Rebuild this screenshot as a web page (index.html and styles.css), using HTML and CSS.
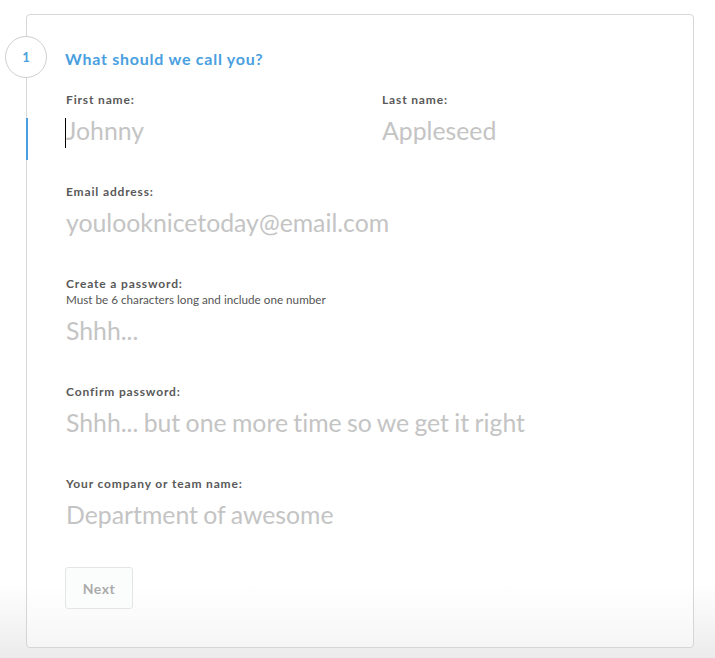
FILE: index.html
```html
<!DOCTYPE html>
<html>
<head>
<meta charset="utf-8">
<link rel="stylesheet" href="styles.css">
</head>
<body>
<div class="card">
  <div class="step-head">
    <div class="step-num">1</div>
    <h2 class="step-title">What should we call you?</h2>
  </div>
  <div class="row">
    <div class="field">
      <label class="label">First name:</label>
      <div class="input-wrap active"><input class="input" placeholder="Johnny"></div>
    </div>
    <div class="field">
      <label class="label">Last name:</label>
      <div class="input-wrap"><input class="input" placeholder="Appleseed"></div>
    </div>
  </div>
  <div class="field">
    <label class="label">Email address:</label>
    <div class="input-wrap"><input class="input" placeholder="youlooknicetoday@email.com"></div>
  </div>
  <div class="field">
    <label class="label">Create a password:</label>
    <div class="hint">Must be 6 characters long and include one number</div>
    <div class="input-wrap"><input class="input" placeholder="Shhh..."></div>
  </div>
  <div class="field">
    <label class="label">Confirm password:</label>
    <div class="input-wrap"><input class="input" placeholder="Shhh... but one more time so we get it right"></div>
  </div>
  <div class="field last">
    <label class="label">Your company or team name:</label>
    <div class="input-wrap"><input class="input" placeholder="Department of awesome"></div>
  </div>
  <button class="next-btn">Next</button>
</div>
</body>
</html>
```

FILE: styles.css
```css
html {
  background: linear-gradient(to bottom, #ffffff 0, #ffffff 585px, #ebebeb 658px);
  min-height: 658px;
}
body {
  margin: 0;
  padding: 14px 21px 0 26px;
  font-family: "Lato", "Liberation Sans", sans-serif;
  color: #555;
}
.card {
  border: 1px solid #d6d6d6;
  border-radius: 4px;
  background: rgba(255, 255, 255, 0.45);
  padding: 21px 0 38px 39px;
}
.step-head {
  display: flex;
  align-items: flex-start;
  gap: 18px;
  margin-left: -61px;
}
.step-num {
  width: 40px;
  height: 40px;
  border: 1px solid #cfcfcf;
  border-radius: 50%;
  background: #fff;
  color: #4a9fe0;
  font-weight: 700;
  font-size: 13px;
  display: flex;
  align-items: center;
  justify-content: center;
  flex: none;
}
.step-title {
  margin: 2px 0 0;
  font-size: 16px;
  line-height: 42px;
  font-weight: 700;
  color: #4a9fe0;
  letter-spacing: 0.75px;
}
.row {
  display: grid;
  grid-template-columns: 316px 1fr;
  margin-top: 13px;
}
.field {
  margin-bottom: 25px;
}
.field.last {
  margin-bottom: 23px;
}
.label {
  display: block;
  font-size: 12px;
  line-height: 14px;
  font-weight: 700;
  color: #595959;
  letter-spacing: 0.85px;
}
.hint {
  font-size: 11.7px;
  line-height: 16px;
  color: #555;
}
.input-wrap {
  position: relative;
  margin-top: 11px;
  height: 42px;
}
.input {
  display: block;
  box-sizing: border-box;
  width: 100%;
  height: 42px;
  padding: 0 0 17px;
  margin: 0;
  border: none;
  outline: none;
  background: transparent;
  font-family: "Lato", "Liberation Sans", sans-serif;
  font-weight: 400;
  font-size: 24.8px;
  line-height: 25px;
  word-spacing: -1px;
  font-variant-ligatures: none;
  color: #555;
}
.input::placeholder {
  color: #c4c4c4;
  opacity: 1;
}
.input-wrap.active::before {
  content: "";
  position: absolute;
  left: -40px;
  top: 0;
  width: 2px;
  height: 42px;
  background: #4a9fe0;
}
.input-wrap.active::after {
  content: "";
  position: absolute;
  left: -1px;
  top: 0;
  width: 1px;
  height: 30px;
  background: #000;
}
.next-btn {
  display: block;
  width: 68px;
  height: 42px;
  margin-left: -1px;
  border: 1px solid #e4e6e6;
  border-radius: 3px;
  background: #fbfcfc;
  color: #ababab;
  font-family: "Lato", "Liberation Sans", sans-serif;
  font-weight: 700;
  font-size: 14px;
  letter-spacing: 0.5px;
  padding: 0;
}
```
